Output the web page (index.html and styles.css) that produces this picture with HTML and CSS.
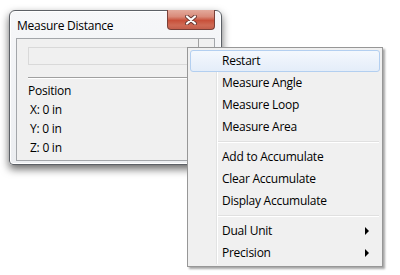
FILE: index.html
```html
<!DOCTYPE html>
<html>
  <head>
    <title>Measure Distance</title>
    <link rel="stylesheet" href="styles.css">
  </head>
  <body>
    <div class="stage">
      <div class="window">
        <div class="titlebar">
          <span class="title">Measure Distance</span>
          <div class="close-btn">
            <svg width="12" height="10" viewBox="0 0 12 10">
              <path d="M2 1.5 L10 8.5 M10 1.5 L2 8.5" stroke="#6a3a34" stroke-width="4" stroke-linecap="round"/>
              <path d="M2 1.5 L10 8.5 M10 1.5 L2 8.5" stroke="#fff" stroke-width="2.2" stroke-linecap="round"/>
            </svg>
          </div>
        </div>
        <div class="panel">
          <div class="panel-main">
            <div class="field"></div>
            <div class="rule"></div>
            <div class="group-label">Position</div>
            <div class="coord">X: 0 in</div>
            <div class="coord">Y: 0 in</div>
            <div class="coord">Z: 0 in</div>
          </div>
          <div class="panel-side">
            <div class="side-btn"></div>
          </div>
        </div>
      </div>

      <div class="menu">
        <div class="menu-item active">Restart</div>
        <div class="menu-item">Measure Angle</div>
        <div class="menu-item">Measure Loop</div>
        <div class="menu-item">Measure Area</div>
        <div class="menu-sep"></div>
        <div class="menu-item">Add to Accumulate</div>
        <div class="menu-item">Clear Accumulate</div>
        <div class="menu-item">Display Accumulate</div>
        <div class="menu-sep"></div>
        <div class="menu-item submenu">Dual Unit</div>
        <div class="menu-item submenu">Precision</div>
      </div>
    </div>
  </body>
</html>
```

FILE: styles.css
```css
body {
  margin: 0;
  background: #fff;
  font-family: "Open Sans", "Noto Sans", sans-serif;
  font-size: 12px;
  letter-spacing: -0.25px;
  color: #000;
}
.stage {
  position: relative;
  width: 400px;
  height: 275px;
  padding: 10px 0 0 9px;
  box-sizing: border-box;
  overflow: hidden;
}
.window {
  position: relative;
  width: 213px;
  height: 155px;
  box-sizing: border-box;
  border: 1px solid #5c6066;
  border-radius: 6px 6px 4px 4px;
  background: linear-gradient(#f6f7f9, #eceef1);
  box-shadow: 0 4px 9px rgba(0, 0, 0, 0.6), inset 0 0 0 1px #fff;
}
.titlebar {
  height: 27px;
  padding-left: 7px;
  display: flex;
  align-items: center;
  padding-top: 1px;
  box-sizing: border-box;
}
.title {
  font-size: 12px;
}
.close-btn {
  position: absolute;
  top: -1px;
  right: 6px;
  width: 48px;
  height: 20px;
  box-sizing: border-box;
  border: 1px solid #7a4038;
  border-top: none;
  border-radius: 0 0 4px 4px;
  background: linear-gradient(#e3aa9c 0%, #d98b7a 35%, #c8503a 55%, #cf6a55 80%, #c45f4c 100%);
  display: flex;
  align-items: center;
  justify-content: center;
}
.panel {
  display: flex;
  height: 121px;
  margin: 0 6px;
  border: 1px solid #a3a6aa;
  background: #f0f0f0;
}
.panel-main {
  width: 170px;
  padding: 8px 0 0 11px;
  border-right: 1px solid #a0a0a0;
}
.panel-side {
  flex: 1;
  padding: 9px 0 0 2px;
}
.side-btn {
  height: 20px;
  border: 1px solid #b5c8de;
  border-radius: 3px;
  background: #f4f6f8;
}
.field {
  height: 18px;
  box-sizing: border-box;
  border: 1px solid #d9d9d9;
  border-right: none;
  background: #f0f0f0;
}
.rule {
  margin-top: 12px;
  height: 0;
  border-top: 1px solid #a0a0a0;
  border-bottom: 1px solid #fff;
}
.group-label {
  margin-top: 4px;
  line-height: 16px;
}
.coord {
  padding-left: 2px;
  line-height: 19px;
}
.coord:first-of-type,
.group-label + .coord {
  margin-top: 1px;
}
.menu {
  position: absolute;
  left: 187px;
  top: 47px;
  width: 196px;
  box-sizing: border-box;
  padding: 2px;
  border: 1px solid #979797;
  background: #f0f0f0;
  box-shadow: 2px 2px 2px rgba(0, 0, 0, 0.35);
}
.menu::before {
  content: "";
  position: absolute;
  top: 2px;
  bottom: 2px;
  left: 28px;
  width: 1px;
  background: #e2e3e3;
  border-right: 1px solid #fff;
}
.menu-item {
  position: relative;
  height: 22px;
  line-height: 22px;
  padding-left: 32px;
  box-sizing: border-box;
}
.menu-item.active {
  border: 1px solid #b3cff0;
  border-radius: 3px;
  padding-left: 31px;
  line-height: 20px;
  background: linear-gradient(#f4f8fd, #e4edf9);
}
.menu-sep {
  height: 8px;
  position: relative;
}
.menu-sep::after {
  content: "";
  position: absolute;
  left: 28px;
  right: 1px;
  top: 3px;
  border-top: 1px solid #e0e0e0;
  border-bottom: 1px solid #fff;
}
.submenu::after {
  content: "";
  position: absolute;
  right: 11px;
  top: 7px;
  border-left: 4px solid #000;
  border-top: 4px solid transparent;
  border-bottom: 4px solid transparent;
}
```
